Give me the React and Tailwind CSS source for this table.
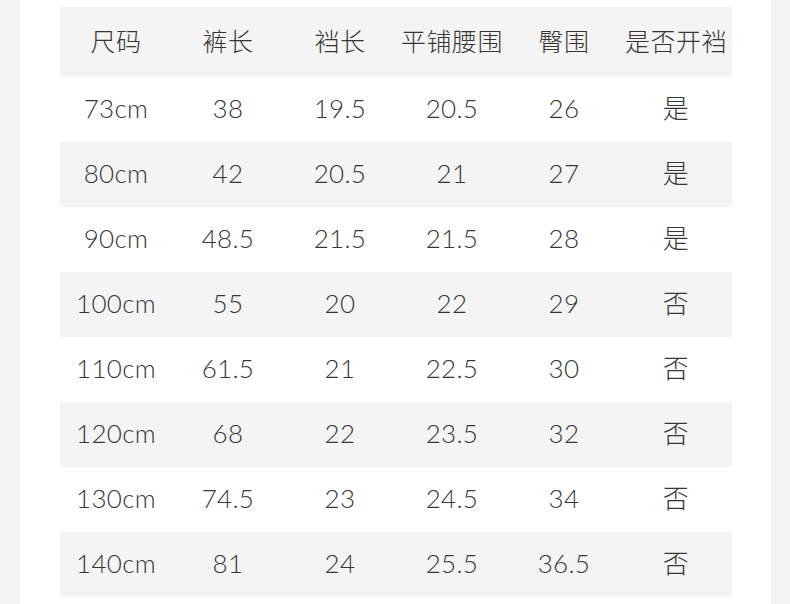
import React from 'react';

const headers = ['尺码', '裤长', '裆长', '平铺腰围', '臀围', '是否开裆'];

const rows = [
    ['73cm', '38', '19.5', '20.5', '26', '是'],
    ['80cm', '42', '20.5', '21', '27', '是'],
    ['90cm', '48.5', '21.5', '21.5', '28', '是'],
    ['100cm', '55', '20', '22', '29', '否'],
    ['110cm', '61.5', '21', '22.5', '30', '否'],
    ['120cm', '68', '22', '23.5', '32', '否'],
    ['130cm', '74.5', '23', '24.5', '34', '否'],
    ['140cm', '81', '24', '25.5', '36.5', '否'],
];

const font = { fontFamily: '"Lato", "Noto Sans CJK SC", sans-serif' };

const App = () => {
    return (
        <div className="w-[790px] h-[604px] bg-[#f4f4f4] overflow-hidden" style={font}>
            <div className="ml-[20px] w-[751px] h-full bg-white pt-[7px]">
                <div className="ml-[40px] w-[672px] text-[#363636]">
                    <div className="grid grid-cols-6 h-[70px] bg-[#f4f4f4] items-center">
                        {headers.map((h) => (
                            <div key={h} className="text-center text-[25px] font-light tracking-[0.5px]">
                                {h}
                            </div>
                        ))}
                    </div>
                    {rows.map((row, i) => (
                        <div
                            key={row[0]}
                            className={`grid grid-cols-6 h-[65px] items-center pb-[3px] ${i % 2 === 1 ? 'bg-[#f4f4f4]' : 'bg-white'}`}
                        >
                            {row.map((cell, j) => (
                                <div key={j} className="text-center text-[26px] font-light tracking-[0.3px]">
                                    {cell}
                                </div>
                            ))}
                        </div>
                    ))}
                </div>
            </div>
        </div>
    );
};

export default App;
